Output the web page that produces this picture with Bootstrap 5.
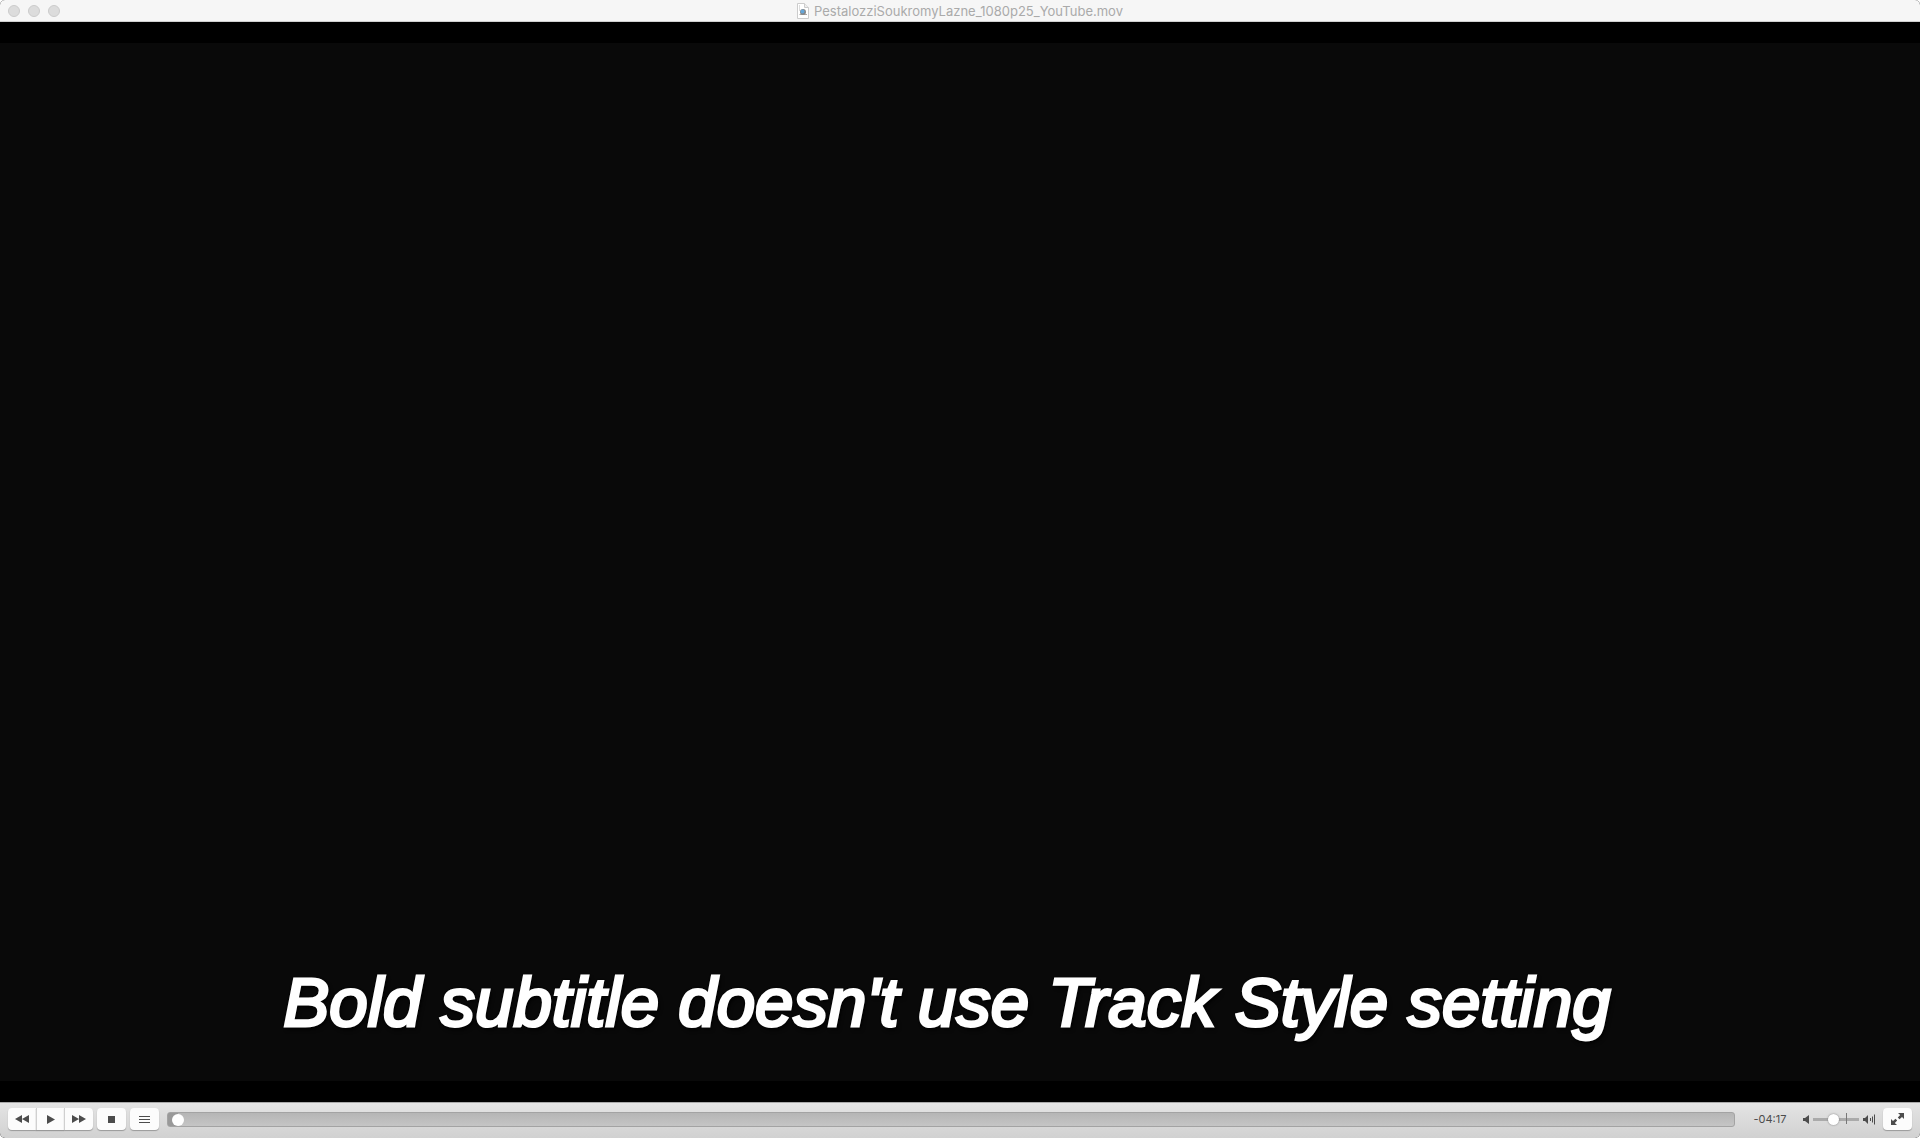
<!DOCTYPE html>
<html lang="en">
<head>
<meta charset="utf-8">
<meta name="viewport" content="width=device-width, initial-scale=1">
<title>PestalozziSoukromyLazne_1080p25_YouTube.mov</title>
<link rel="stylesheet" href="https://cdn.jsdelivr.net/npm/bootstrap@5.3.0/dist/css/bootstrap.min.css">
<style>
body { background: #fff; font-family: Inter, Roboto, sans-serif; }
.player { background: #000; border-radius: 5px; }
.titlebar { height: 22px; background: #f6f6f6; border-bottom: 1px solid #d0d0d0; padding: 0 8px; }
.lights, .balance { flex: 1 1 0; gap: 8px; }
.light { width: 12px; height: 12px; padding: 0; border: 1px solid #cbcbcb; border-radius: 50%; background: #dcdcdc; }
.filename { font-size: 13px; line-height: 20px; font-weight: 400; color: #aaa; gap: 5px; margin: 0; }
.stage { padding: 21px 0; }
.video { background: #090909; padding: 0 26px 38px 0; }
.subtitle { margin: 0; font: italic 400 69px/80px "Liberation Sans", Arial, sans-serif; color: #fff; -webkit-text-stroke: 3px #fff; text-shadow: 2px 3px 4px #000, 0 0 3px #000; }
.controls { height: 36px; padding: 0 8px 3px; border-top: 1px solid #a9a9a9; background: linear-gradient(#e4e4e4, #d1d1d1); }
.key { height: 22px; width: 29px; padding: 0; border: 0; border-radius: 4px; background: #fcfcfc; box-shadow: 0 1px 1px #999; color: #4c4c4c; }
.key:hover { background: #fff; }
.key svg { display: block; margin: auto; }
.trio .key + .key { border-left: 1px solid #d0d0d0; }
.key-first { width: 28px; }
.tools { gap: 4px; }
input[type=range] { -webkit-appearance: none; appearance: none; margin: 0; }
.seek { height: 15px; min-width: 0; padding: 0 4px; border: 1px solid #a3a3a3; border-radius: 3px; background: linear-gradient(90deg, #999 10px, transparent 10px), linear-gradient(#b5b5b5, #c5c5c5); margin-left: 8px !important; }
.seek::-webkit-slider-runnable-track { height: 13px; }
.seek::-webkit-slider-thumb { -webkit-appearance: none; width: 12px; height: 12px; border-radius: 50%; background: #fff; margin-top: 1px; }
.clock { width: 68px; padding-left: 2px; text-align: center; font-size: 11px; line-height: 14px; color: #4c4c4c; }
.volume { color: #4c4c4c; width: 80px; gap: 4px; flex: none; }
.volume svg { flex: none; }
.vol { width: 46px; height: 12px; background: linear-gradient(#aaa, #aaa) 0 5px / 46px 3px no-repeat; }
.vol::-webkit-slider-thumb { -webkit-appearance: none; width: 11px; height: 11px; border-radius: 50%; background: #fff; box-shadow: 0 0 2px #777; }
.mark-full { position: absolute; left: 33px; top: 0; width: 1px; height: 11px; background: #777; }
.vol-wrap { position: relative; height: 12px; display: flex; }
</style>
<script src="https://cdn.jsdelivr.net/npm/bootstrap@5.3.0/dist/js/bootstrap.bundle.min.js"></script>
</head>
<body>
<main class="player d-flex flex-column vh-100 overflow-hidden">
  <header class="titlebar d-flex align-items-center">
    <div class="lights d-flex align-items-center">
      <button class="light" type="button" aria-label="Close"></button>
      <button class="light" type="button" aria-label="Minimize"></button>
      <button class="light" type="button" aria-label="Zoom"></button>
    </div>
    <h1 class="filename d-flex align-items-center">
      <svg width="12" height="16" viewBox="0 0 12 16" aria-hidden="true"><path d="M.5.5h7l4 4v11H.5z" fill="#fff" stroke="#ccc"/><path d="M7.500.5v4h4" fill="#eee" stroke="#ccc"/><path d="M2 3h1M2 5h1M2 7h1" stroke="#bbb"/><path d="M2 11h8v1H3z" fill="#aaa"/><circle cx="6" cy="9" r="3" fill="#888"/><circle cx="5.500" cy="8.500" r="2" fill="#65a6d8"/></svg>
      <span>PestalozziSoukromyLazne_1080p25_YouTube.mov</span>
    </h1>
    <div class="balance"></div>
  </header>
  <section class="stage d-flex flex-grow-1" aria-label="Video">
    <div class="video d-flex flex-grow-1 align-items-end justify-content-center">
      <p class="subtitle text-center">Bold subtitle doesn't use Track Style setting</p>
    </div>
  </section>
  <footer class="controls d-flex align-items-center">
    <div class="tools d-flex">
      <div class="trio btn-group" role="group" aria-label="Playback">
        <button class="key key-first rounded-end-0" type="button" aria-label="Rewind"><svg width="14" height="8" viewBox="0 0 14 8" fill="currentColor"><path d="M7 0v8L0 4zM14 0v8L7 4z"/></svg></button>
        <button class="key key-first rounded-0" type="button" aria-label="Play"><svg width="8" height="9" viewBox="0 0 8 9" fill="currentColor"><path d="M0 0l8 4.500L0 9z"/></svg></button>
        <button class="key rounded-start-0" type="button" aria-label="Fast forward"><svg width="14" height="8" viewBox="0 0 14 8" fill="currentColor"><path d="M0 0l7 4-7 4zM7 0l7 4-7 4z"/></svg></button>
      </div>
      <button class="key" type="button" aria-label="Stop"><svg width="7" height="7" viewBox="0 0 7 7"><path d="M0 0h7v7H0z" fill="currentColor"/></svg></button>
      <button class="key" type="button" aria-label="Playlist"><svg width="11" height="7" viewBox="0 0 11 7" fill="currentColor"><path d="M0 0h11v1H0zM0 3h11v1H0zM0 6h11v1H0z"/></svg></button>
    </div>
    <input class="seek flex-grow-1" type="range" min="0" max="257" value="0" aria-label="Position">
    <time class="clock">-04:17</time>
    <div class="volume d-flex align-items-center">
      <svg width="6" height="9" viewBox="0 0 6 9" fill="currentColor" aria-hidden="true"><path d="M0 3h2l4-3v9L2 6H0z"/></svg>
      <div class="vol-wrap"><input class="vol" type="range" min="0" max="125" value="54" aria-label="Volume"><span class="mark-full"></span></div>
      <svg width="12" height="11" viewBox="0 0 12 11" aria-hidden="true"><path d="M0 4h2l3-3v9L2 7H0z" fill="currentColor"/><path d="M7.500 4v3M9.500 2.500v6M11.500 .5v10" stroke="currentColor" stroke-width="1"/></svg>
    </div>
    <button class="key" type="button" aria-label="Full screen"><svg width="13" height="12" viewBox="0 0 13 12"><path d="M7 0h6v6l-2-2-2.500 2.200L6.800 4.600 9.200 2zM6 12H0V6l2 2 2.500-2.200 1.700 1.600L3.800 10z" fill="currentColor"/></svg></button>
  </footer>
</main>
</body>
</html>
